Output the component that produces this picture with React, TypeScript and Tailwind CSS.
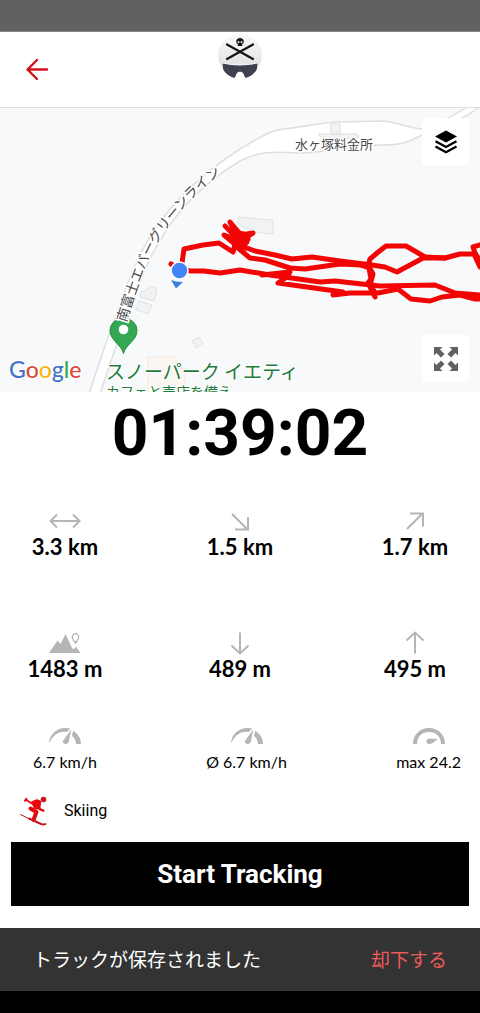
import type { ReactNode } from "react";

const JP = "font-['Noto_Sans_CJK_JP',sans-serif]";

// ── Icons ────────────────────────────────────────────────────────────────────

function BackIcon() {
  return (
    <svg viewBox="0 0 24 24" className="h-6 w-6" fill="none" stroke="#d5121a" strokeWidth="2.4" strokeLinecap="round" strokeLinejoin="round">
      <path d="M22 12.500H2.500M12 3 2.500 12.500 12 22" />
    </svg>
  );
}

function Logo() {
  return (
    <svg viewBox="0 0 48 48" className="h-12 w-12" role="img" aria-label="Logo">
      <defs>
        <linearGradient id="helmet" x1="0" y1="0" x2="0" y2="1">
          <stop offset="0" stopColor="#fafafa" />
          <stop offset="1" stopColor="#e2e2e2" />
        </linearGradient>
      </defs>
      <path d="M24 2C12 2 2 12 2 23c0 5 1 8 3 11h38c2-3 3-6 3-11C46 12 36 2 24 2Z" fill="url(#helmet)" />
      {/* crossed skis */}
      <path d="M11 12.500 37 27M37 12.500 11 27" stroke="#151515" strokeWidth="2.200" strokeLinecap="round" />
      {/* skull */}
      <path d="M24 6c-2.300 0-3.800 1.500-3.800 3.500 0 1.300.6 2 1.600 2.500v2h4.400v-2c1-.5 1.600-1.200 1.600-2.500C27.800 7.500 26.300 6 24 6Z" fill="#151515" />
      <circle cx="22.500" cy="10" r="1" fill="#eee" />
      <circle cx="25.500" cy="10" r="1" fill="#eee" />
      {/* goggles */}
      <path d="M6.500 31.500c11 2.500 24 2.500 35 0l-.5 5.500c-2 4-6 7.500-11.500 9L27 41c-1.500-1.600-4.500-1.600-6 0l-2.500 5C13 44.500 9 41 7 37Z" fill="#3f4150" stroke="#fff" strokeWidth="1.500" paintOrder="stroke" />
    </svg>
  );
}

function LayersIcon() {
  return (
    <svg viewBox="0 0 24 24" className="h-6 w-6">
      <path d="M12 .5 23 6.500 12 12.500 1 6.500Z" fill="#000" />
      <path d="m1.500 11.300 10.500 5.700 10.500-5.700M1.500 16.500 12 22.200l10.500-5.700" fill="none" stroke="#000" strokeWidth="2.300" />
    </svg>
  );
}

function ExpandIcon() {
  const arrow = "M0 0h8.500L6 2.500l4.500 4.500-3.500 3.500L2.500 6 0 8.500Z";
  return (
    <svg viewBox="0 0 24 24" className="h-6 w-6" fill="#616161">
      <path d={arrow} />
      <path d={arrow} transform="translate(24 0) scale(-1 1)" />
      <path d={arrow} transform="translate(0 24) scale(1 -1)" />
      <path d={arrow} transform="translate(24 24) scale(-1 -1)" />
    </svg>
  );
}

function LineIcon({ d }: { d: string }) {
  return (
    <svg viewBox="0 0 32 24" className="h-6 w-8" fill="none" stroke="#b5b5b5" strokeWidth="2">
      <path d={d} />
    </svg>
  );
}

function MountainIcon() {
  return (
    <svg viewBox="0 0 32 24" className="h-6 w-8" fill="#b5b5b5">
      <path d="M0 22 8.500 9.500l3 3.500L16.500 3 23 17l1.500 5Z" />
      <path d="m22 22 1-4.500 2 .5 1.800-2.500L31.500 22Z" />
      <path d="M26.500 2.700a3.200 3.200 0 0 1 3.200 3.300c0 2-3.200 6-3.200 6s-3.200-4-3.200-6a3.200 3.200 0 0 1 3.200-3.300Z" fill="#fff" stroke="#b5b5b5" strokeWidth="1.200" />
      <path d="M25 10h3l-1.500 3Z" />
    </svg>
  );
}

function GaugeIcon() {
  return (
    <svg viewBox="0 0 32 16" className="h-4 w-8" fill="#b5b5b5">
      <path d="M0 15.500C.5 6 8 0 16.500 0c2 0 3 .2 4.500.6L18 4C10 2.500 4 7 0 15.500Z" />
      <path d="M22.500 1 19.700 14c-.6 3-6.500 2.500-5.800-1Z" />
      <path d="M24 3c5 2.500 7.700 7 8 13h-5c-.2-3.500-1.500-6-4-8Z" />
    </svg>
  );
}

function MaxGaugeIcon() {
  return (
    <svg viewBox="0 0 32 16" className="h-4 w-8" fill="#b5b5b5">
      <path d="M0 16C0 6.500 7 0 16 0s16 6.500 16 16h-4C28 8.500 23 4 16 4S4 8.500 4 16Z" />
      <path d="M24.500 11c-2.500 2.500-4 4.500-8 5-3 .2-4.300-4-1.500-5 2-.5 6 .3 9.500 0Z" />
    </svg>
  );
}

function SkierIcon() {
  return (
    <svg viewBox="0 0 28 30" className="h-[30px] w-7" fill="none" stroke="#e8090e" strokeLinecap="round" strokeLinejoin="round">
      <circle cx="23.500" cy="3.500" r="2.800" fill="#c9151b" stroke="none" />
      <path d="m5.500 3.500 18 11.500" strokeWidth="1.600" />
      <path d="m5 4.800 1.500-2" strokeWidth="2" />
      <path d="m12 6 5-2 3.500 1.500-1 7.500-5-1Z" fill="#e8090e" strokeWidth="1.500" />
      <path d="m10.500 12.500 6 3.500-3 8" strokeWidth="4" />
      <path d="m18 9 2 4.500 3.500 1" strokeWidth="2" />
      <path d="m.5 18.500 9 4.500" stroke="#b8181d" strokeWidth="1" />
      <path d="m9 22.500 11 5c2 1 4 1.500 5.500.5" stroke="#c9151b" strokeWidth="2" />
    </svg>
  );
}

// ── Map ──────────────────────────────────────────────────────────────────────

const TRACKS = [
  "M171 263 181 269 184 248 203 244 219 242 233 251 236 240",
  "M225 225 240 240 230 221 241 234 253 232 240 240 224 234 236 244 248 238 231 238 246 247",
  "M232 231 244 233 247 241 240 247 231 239 245 236 242 244",
  "M236 243 255 250 275 254 292 258 312 256 340 260 372 264 385 266 397 271 425 256 445 257 460 253 474 253 480 266",
  "M238 247 250 257 265 259 290 267 305 268 340 263 362 264",
  "M181 267 190 270 204 270 220 272 240 269 270 274 320 281 335 280 380 285 435 284 455 292 480 294",
  "M262 274 290 271 287 276 278 282 343 291 333 294 350 292 378 292 398 288 411 298 430 300 442 296 460 294 475 298 480 298",
  "M368 265 370 258 377 252 386 245 406 245 425 256",
  "M358 263 369 267 371 278 368 282 375 296M368 264 373 273 370 284 374 290",
  "M425 257 445 257M480 244 473 246 475 252 480 260",
];

function TrackMap() {
  return (
    <svg viewBox="0 107 480 284" preserveAspectRatio="xMidYMid slice" className={`block h-[284px] w-full bg-[#f8f9fb] ${JP}`}>
      {/* road */}
      <path
        d="M88 396C103 350 118 305 136 262C155 220 190 180 240 148C258 138 268 130 283 128C300 127 318 122 335 121L384 120C398 121 410 128 424 128C445 120 458 112 470 104L482 104C465 118 448 124 424 133C405 143 400 144 380 144C350 145 325 152 300 152C275 151 262 149 240 160C200 184 170 215 148 262C130 305 117 340 99 396Z"
        fill="#fff"
        stroke="#dddfe1"
        strokeWidth="1.500"
      />
      <path d="M331 123h9v10h-9ZM318 133h38q6 3 0 4h-34Z" fill="#f1f3f4" stroke="#dcdee0" />
      {/* buildings */}
      <g fill="#f1f2f4" stroke="#e0e2e4">
        <path d="m238 216 35 3v14l-20-2-15-8Z" />
        <path d="m141 291 7-3 2-3 7 3-3 12-14-4ZM139 300l13 4-3 9-13-4ZM192 340l7-4 4 6-7 5Z" />
      </g>
      <path d="M148 356h28v11h9v25h-37Z" fill="#fbf6f1" stroke="#f6e6da" />

      {/* ski park pin */}
      <path d="M123.500 352.500c-2-9-13.500-13-13.500-23a13.500 12.500 0 0 1 27 0c0 10-11.500 14-13.500 23Z" fill="#34a853" stroke="#1e8e3e" />
      <circle cx="123.500" cy="328.500" r="4.800" fill="#fff" />

      <g fill="#4a4a4a" stroke="#fff" strokeWidth="3" paintOrder="stroke">
        <path id="road-label" d="M126 322C138 284 149 251 165 230C181 208 198 189 226 169" fill="none" stroke="none" />
        <text fontSize="14">
          <textPath href="#road-label">南富士エバーグリーンライン</textPath>
        </text>
        <text x="295" y="148" fontSize="13">水ヶ塚料金所</text>
      </g>

      {/* recorded track */}
      <g fill="none" stroke="#f20505" strokeWidth="5" strokeLinecap="round" strokeLinejoin="round">
        {TRACKS.map((d) => (
          <path key={d} d={d} />
        ))}
      </g>

      {/* current position */}
      <path d="m171 279 5 1.500 7 .5-7 6.500Z" fill="#3f7fe0" />
      <circle cx="179.500" cy="269.500" r="8.500" fill="#4285f4" stroke="#fff" strokeWidth="1.500" />

      <g fill="#1e7b3c" stroke="#fff" strokeWidth="2" paintOrder="stroke">
        <text x="106" y="378" fontSize="19">スノーパーク イエティ</text>
        <text x="106" y="396" fontSize="14">カフェと売店を備え</text>
      </g>

      <text x="9" y="377" fontSize="23" className="font-['Lato',sans-serif] font-medium" stroke="#fff" strokeWidth="2" paintOrder="stroke">
        <tspan fill="#4274c9">G</tspan>
        <tspan fill="#d9483b">o</tspan>
        <tspan fill="#f0b90b">o</tspan>
        <tspan fill="#4274c9">g</tspan>
        <tspan fill="#34a853">l</tspan>
        <tspan fill="#d9483b">e</tspan>
      </text>
    </svg>
  );
}

function MapButton({ label, children }: { label: string; children: ReactNode }) {
  return (
    <button type="button" aria-label={label} className="flex h-[47px] w-[47px] items-center justify-center rounded bg-white">
      {children}
    </button>
  );
}

// ── Stats ────────────────────────────────────────────────────────────────────

function Stat({ icon, value }: { icon: ReactNode; value: string }) {
  return (
    <div className="flex flex-col items-center">
      {icon}
      <span className="text-[22px] leading-7 font-bold">{value}</span>
    </div>
  );
}

function Speed({ icon, value }: { icon: ReactNode; value: string }) {
  return (
    <div className="flex flex-col items-center gap-2">
      {icon}
      <span className="text-base leading-5">{value}</span>
    </div>
  );
}

export default function App() {
  return (
    <div className="flex min-h-screen flex-col bg-white font-['Roboto',sans-serif] text-black">
      <div className="h-8 border-b border-[#858585] bg-[#616161]" />

      <header className="grid h-[75px] grid-cols-3 items-start px-[25px]">
        <button type="button" aria-label="Back" className="mt-[25px] w-6">
          <BackIcon />
        </button>
        <div className="flex justify-center">
          <Logo />
        </div>
      </header>

      <section className="relative border-t border-[#dcdee0]">
        <TrackMap />
        <div className="absolute inset-y-2.5 right-[11px] flex flex-col justify-between">
          <MapButton label="Map layers">
            <LayersIcon />
          </MapButton>
          <MapButton label="Full screen">
            <ExpandIcon />
          </MapButton>
        </div>
      </section>

      <main className="flex flex-1 flex-col">
        <div className="mt-1.5 text-center text-[64px] leading-[72px] font-bold">01:39:02</div>

        <div className="mt-[39px] grid grid-cols-3 gap-x-[45px] gap-y-[70px] font-['Lato',sans-serif]">
          <Stat icon={<LineIcon d="M1 12h30M8 5.500 1.500 12 8 18.500M24 5.500l6.500 6.500-6.500 6.500" />} value="3.3 km" />
          <Stat icon={<LineIcon d="m8 5 15 15M24 8v12.500H11" />} value="1.5 km" />
          <Stat icon={<LineIcon d="M8 20 23.500 4.500M11 4.500h13V17.500" />} value="1.7 km" />
          <Stat icon={<MountainIcon />} value="1483 m" />
          <Stat icon={<LineIcon d="M16 1.500v21M7.500 14.500 16 22.500l8.500-8" />} value="489 m" />
          <Stat icon={<LineIcon d="M16 22.500v-21M7.500 9.500 16 1.500l8.500 8" />} value="495 m" />
        </div>

        <div className="mt-[45px] flex justify-between pr-[19px] pl-[33px] font-['Lato',sans-serif]">
          <Speed icon={<GaugeIcon />} value="6.7 km/h" />
          <Speed icon={<GaugeIcon />} value="Ø 6.7 km/h" />
          <Speed icon={<MaxGaugeIcon />} value="max 24.2" />
        </div>

        <div className="mt-6 flex items-center gap-4 pl-5">
          <SkierIcon />
          <span className="text-base">Skiing</span>
        </div>

        <div className="mt-4 px-[11px]">
          <button type="button" className="h-16 w-full bg-black text-[26px] font-bold text-white">
            Start Tracking
          </button>
        </div>
      </main>

      <div className={`flex h-[63px] items-center justify-between bg-[#333] px-[33px] text-[19px] ${JP}`}>
        <span className="text-white">トラックが保存されました</span>
        <button type="button" className="text-[#ef5a5a]">
          却下する
        </button>
      </div>
      <div className="h-[22px] bg-black" />
    </div>
  );
}
